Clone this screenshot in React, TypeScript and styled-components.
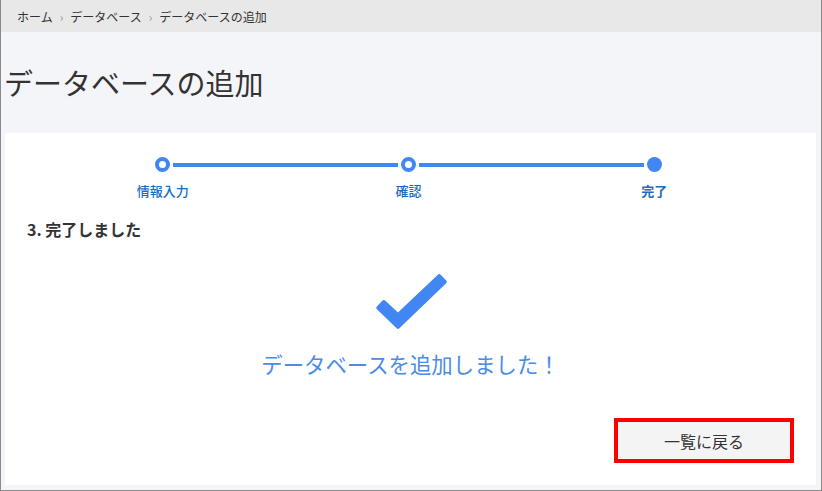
import React, { FC } from "react";
import styled, { createGlobalStyle } from "styled-components";

const GlobalStyle = createGlobalStyle`
  html, body {
    margin: 0;
    padding: 0;
    background: #ffffff;
  }
  body {
    font-family: "Noto Sans CJK JP", "Noto Sans", "Liberation Sans", sans-serif;
    color: #333333;
  }
  * {
    box-sizing: border-box;
  }
`;

type Step = {
  label: string;
  done: boolean;
};

const steps: Step[] = [
  { label: "情報入力", done: false },
  { label: "確認", done: false },
  { label: "完了", done: true },
];

const crumbs = ["ホーム", "データベース", "データベースの追加"];

const App: FC = () => {
  return (
    <>
      <GlobalStyle />
      <Frame>
        <Breadcrumb>
          {crumbs.map((c, idx) => (
            <React.Fragment key={c}>
              {idx > 0 && <Chevron>›</Chevron>}
              <span>{c}</span>
            </React.Fragment>
          ))}
        </Breadcrumb>
        <Main>
          <TitleBar>
            <h1>データベースの追加</h1>
          </TitleBar>
          <Card>
            <Stepper>
              {steps.map((s, idx) => (
                <StepCol key={s.label}>
                  <Track>
                    <Line $hidden={idx === 0} $side="left" />
                    <Dot $filled={s.done} />
                    <Line $hidden={idx === steps.length - 1} $side="right" />
                  </Track>
                  <StepLabel $active={s.done}>{s.label}</StepLabel>
                </StepCol>
              ))}
            </Stepper>
            <SectionTitle>3. 完了しました</SectionTitle>
            <Result>
              <svg width="80" height="65" viewBox="0 0 80 65">
                <path
                  d="M7.26 38.91 L27.02 57.8 L73.76 12.89 L68.24 7.11 L26.98 46.2 L12.74 33.09 Z"
                  fill="#4286f4"
                  stroke="#4286f4"
                  strokeWidth="4"
                  strokeLinejoin="round"
                />
              </svg>
              <Message>データベースを追加しました！</Message>
            </Result>
            <Actions>
              <BackButton>一覧に戻る</BackButton>
            </Actions>
          </Card>
        </Main>
      </Frame>
    </>
  );
};

const Frame = styled.div`
  width: 822px;
  height: 491px;
  display: flex;
  flex-direction: column;
  border-left: 1px solid #8a8a8a;
  border-right: 1px solid #8a8a8a;
  border-bottom: 1px solid #8a8a8a;
  overflow: hidden;
`;

const Breadcrumb = styled.div`
  height: 32px;
  flex: none;
  display: flex;
  align-items: center;
  padding-left: 16px;
  background: #e8e8e8;
  font-size: 12px;
  color: #333333;
`;

const Chevron = styled.span`
  color: #9a9a9a;
  margin: 0 7px;
  font-size: 12px;
`;

const Main = styled.div`
  flex: 1;
  display: flex;
  flex-direction: column;
  background: #f4f5f9;
  padding: 0 5px 5px 4px;
`;

const TitleBar = styled.div`
  height: 101px;
  flex: none;
  display: flex;
  align-items: center;

  h1 {
    margin: 0 0 0 -1px;
    font-size: 29px;
    font-weight: normal;
    line-height: 1;
    color: #333333;
  }
`;

const Card = styled.div`
  flex: 1;
  display: flex;
  flex-direction: column;
  background: #ffffff;
  padding: 24px 22px 22px 0;
`;

const Stepper = styled.div`
  display: grid;
  grid-template-columns: repeat(3, 1fr);
  margin: 0 17px 0 35px;
`;

const StepCol = styled.div`
  display: flex;
  flex-direction: column;
  align-items: center;
`;

const Track = styled.div`
  width: 100%;
  height: 15px;
  display: flex;
  align-items: center;
`;

const Line = styled.div<{ $hidden: boolean; $side: "left" | "right" }>`
  flex: 1;
  height: 4px;
  background: ${(p) => (p.$hidden ? "transparent" : "#4286f4")};
  margin: ${(p) => (p.$side === "left" ? "0 3px 0 0" : "0 0 0 3px")};
`;

const Dot = styled.div<{ $filled: boolean }>`
  width: 15px;
  height: 15px;
  flex: none;
  border-radius: 50%;
  background: ${(p) => (p.$filled ? "#4286f4" : "#ffffff")};
  border: ${(p) => (p.$filled ? "none" : "4.5px solid #4286f4")};
`;

const StepLabel = styled.div<{ $active: boolean }>`
  margin-top: 10px;
  font-size: 13px;
  line-height: 18px;
  font-weight: ${(p) => (p.$active ? "bold" : 500)};
  color: #1a6cc0;
`;

const SectionTitle = styled.h3`
  margin: 19px 0 0 22px;
  font-size: 16px;
  line-height: 20px;
  font-weight: bold;
  color: #333333;
`;

const Result = styled.div`
  display: flex;
  flex-direction: column;
  align-items: center;
  margin-top: 30px;
  padding-left: 22px;

  svg {
    display: block;
  }
`;

const Message = styled.p`
  margin: 16px 0 0;
  font-size: 21.4px;
  line-height: 28px;
  color: #4a8ce8;
`;

const Actions = styled.div`
  margin-top: auto;
  display: flex;
  justify-content: flex-end;
`;

const BackButton = styled.button`
  width: 180px;
  height: 45px;
  background: #f4f4f4;
  border: 4px solid #ff0000;
  font-family: inherit;
  font-size: 16px;
  color: #333333;
  cursor: pointer;
  &:hover {
    background: #eaeaea;
  }
`;

export default App;
